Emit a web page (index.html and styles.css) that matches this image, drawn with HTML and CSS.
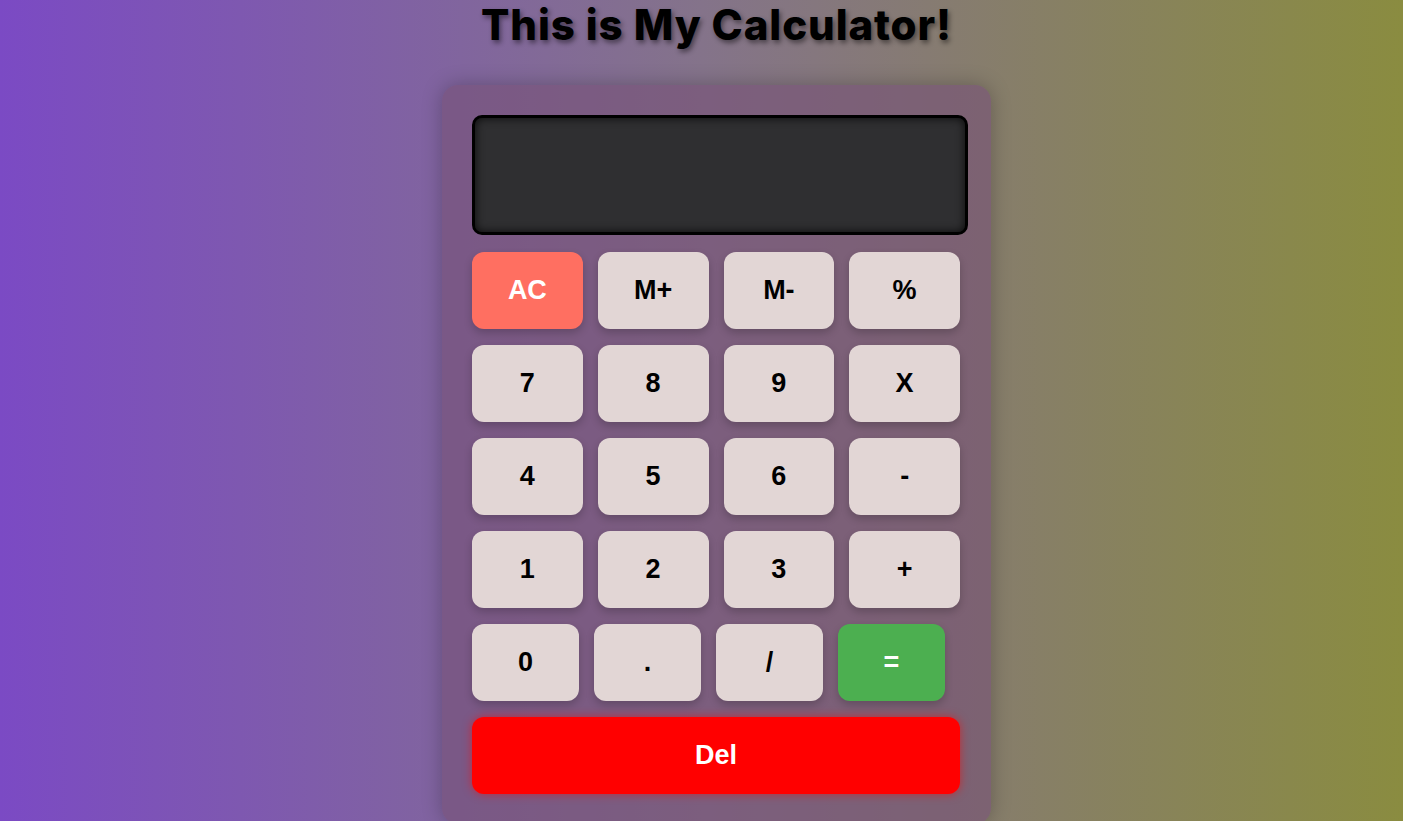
FILE: index.html
```html
<!DOCTYPE html>
<html lang="en">
<head>
<meta charset="utf-8">
<title>Calculator</title>
<link rel="stylesheet" href="styles.css">
</head>
<body>
  <h1 class="title">This is My Calculator!</h1>
  <div class="calc">
    <div class="display"></div>
    <div class="keys">
      <button class="key key-ac">AC</button>
      <button class="key">M+</button>
      <button class="key">M-</button>
      <button class="key">%</button>
      <button class="key">7</button>
      <button class="key">8</button>
      <button class="key">9</button>
      <button class="key">X</button>
      <button class="key">4</button>
      <button class="key">5</button>
      <button class="key">6</button>
      <button class="key">-</button>
      <button class="key">1</button>
      <button class="key">2</button>
      <button class="key">3</button>
      <button class="key">+</button>
    </div>
    <div class="last-row">
      <button class="key key-small">0</button>
      <button class="key key-small">.</button>
      <button class="key key-small">/</button>
      <button class="key key-small key-eq">=</button>
    </div>
    <button class="key key-del">Del</button>
  </div>
</body>
</html>
```

FILE: styles.css
```css
html, body {
  margin: 0;
  height: 100%;
}

body {
  padding-left: 30px;
  background: linear-gradient(to right, #7b4ac4 0%, #84738a 50%, #8a8c40 100%);
  font-family: "Liberation Sans", Arial, sans-serif;
  overflow: hidden;
  display: flex;
  flex-direction: column;
  align-items: center;
}

.title {
  margin: 0;
  font-family: Inter, "Open Sans", sans-serif;
  font-weight: 800;
  font-size: 42px;
  letter-spacing: 0.9px;
  line-height: 50px;
  color: #000;
  text-shadow: 2px 3px 5px rgba(0, 0, 0, 0.45);
}

.calc {
  margin-top: 35px;
  width: 488px;
  padding: 30px 31px 30px 30px;
  border-radius: 16px;
  background: rgba(118, 80, 118, 0.6);
  box-shadow: 0 0 20px rgba(0, 0, 0, 0.25);
  display: flex;
  flex-direction: column;
}

.display {
  width: 490px;
  height: 114px;
  background: #2f2f31;
  border: 3px solid #000;
  border-radius: 10px;
  box-shadow: inset 0 0 10px rgba(0, 0, 0, 0.8);
}

.keys {
  margin-top: 17px;
  display: grid;
  grid-template-columns: repeat(4, 1fr);
  column-gap: 15px;
  row-gap: 16px;
}

.key {
  height: 77px;
  border: none;
  border-radius: 12px;
  background: #e2d6d5;
  color: #000;
  font-family: "Liberation Sans", Arial, sans-serif;
  font-weight: bold;
  font-size: 27px;
  padding: 0;
  box-shadow: 0 4px 8px rgba(0, 0, 0, 0.2);
}

.key-ac {
  background: #ff6f61;
  color: #fff;
}

.last-row {
  margin-top: 16px;
  display: flex;
  gap: 15px;
}

.key-small {
  width: 107px;
}

.key-eq {
  background: #4caf50;
  color: #fff;
}

.key-del {
  margin-top: 16px;
  width: 488px;
  background: #ff0000;
  color: #fff;
  box-shadow: 0 0 10px rgba(255, 0, 0, 0.55);
}
```
